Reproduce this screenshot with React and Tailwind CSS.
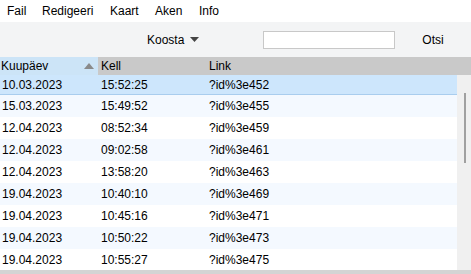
import React from 'react';

const rows = [
  ['10.03.2023', '15:52:25', '?id%3e452'],
  ['15.03.2023', '15:49:52', '?id%3e455'],
  ['12.04.2023', '08:52:34', '?id%3e459'],
  ['12.04.2023', '09:02:58', '?id%3e461'],
  ['12.04.2023', '13:58:20', '?id%3e463'],
  ['19.04.2023', '10:40:10', '?id%3e469'],
  ['19.04.2023', '10:45:16', '?id%3e471'],
  ['19.04.2023', '10:50:22', '?id%3e473'],
  ['19.04.2023', '10:55:27', '?id%3e475'],
];

export default function App() {
  return (
    <div className="w-[471px] h-[274px] overflow-hidden bg-white text-[12px] text-black flex flex-col" style={{ fontFamily: '"Liberation Sans", Arial, sans-serif' }}>
      {/* menu */}
      <div className="h-[22px] flex items-center pl-[7px] bg-white shrink-0">
        <span className="w-[35px]">Fail</span>
        <span className="w-[68px]">Redigeeri</span>
        <span className="w-[45px]">Kaart</span>
        <span className="w-[44px]">Aken</span>
        <span>Info</span>
      </div>

      {/* toolbar */}
      <div className="h-[35px] bg-[#f3f4f5] flex items-center shrink-0">
        <div className="ml-[147px] flex items-center gap-[6px]">
          <span>Koosta</span>
          <svg width="9" height="5" viewBox="0 0 9 5"><path d="M0 0h9L4.5 5z" fill="#444" /></svg>
        </div>
        <div className="ml-[64px] w-[132px] h-[18px] bg-white border border-[#c8c8c8]" />
        <span className="ml-[27px]">Otsi</span>
      </div>

      {/* header */}
      <div className="h-[18px] bg-[#c9c9c9] flex items-center shrink-0">
        <div className="w-[98px] h-full bg-[#cce4f7] flex items-center pl-[1px] relative">
          <span>Kuupäev</span>
          <svg className="absolute left-[84px] top-[6px]" width="10" height="6" viewBox="0 0 10 6"><path d="M5 0l5 6H0z" fill="#8a8a8a" /></svg>
        </div>
        <span className="ml-[3px] w-[108px]">Kell</span>
        <span>Link</span>
      </div>

      {/* body */}
      <div className="flex flex-1 min-h-0">
        <div className="flex-1 flex flex-col">
          {rows.map((r, i) => (
            <div
              key={i}
              className={`flex items-center shrink-0 ${i === 0 ? 'h-[20px] bg-[#cde6fc] border-b border-[#a9cdee]' : 'h-[22px]'} ${i > 0 && i % 2 === 1 ? 'bg-[#f4f9ff]' : ''} ${i > 0 && i % 2 === 0 ? 'bg-white' : ''}`}
            >
              <span className="pl-[2px] w-[101px]">{r[0]}</span>
              <span className="w-[108px]">{r[1]}</span>
              <span>{r[2]}</span>
            </div>
          ))}
        </div>
        <div className="w-[14px] bg-[#f0f0f0] relative">
          <div className="absolute left-[7px] top-[18px] w-[2px] h-[70px] bg-[#a0a0a0]" />
        </div>
      </div>
      <div className="h-[4px] bg-[#d4d4d4] shrink-0" />
    </div>
  );
}
